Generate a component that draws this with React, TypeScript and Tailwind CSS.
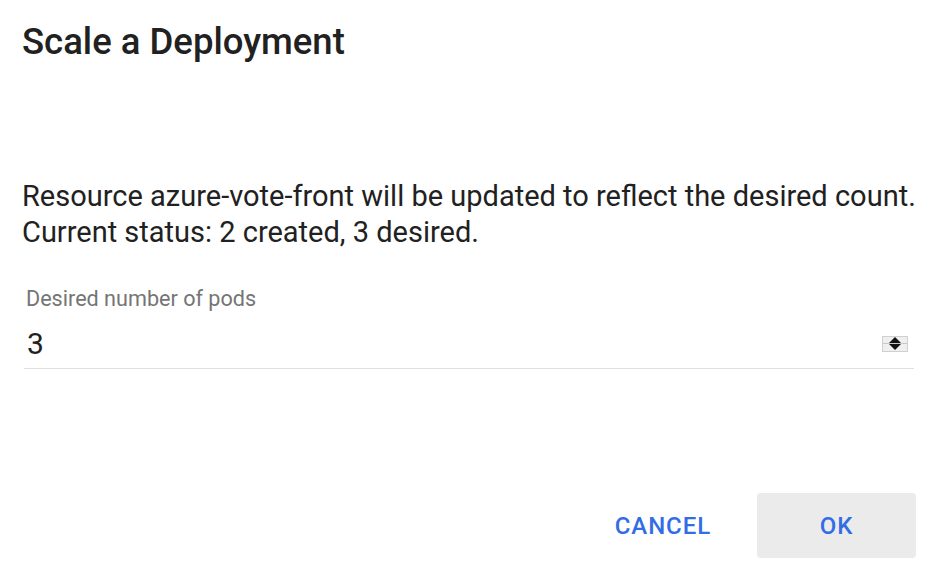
export default function App() {
  return (
    <div className="w-[933px] h-[586px] bg-white flex flex-col font-['Roboto',sans-serif] text-[#212121]">
      <h2 className="pl-[22px] pt-[21px] text-[36.5px] leading-[42px] font-medium">Scale a Deployment</h2>

      <div className="pl-[22px] pr-[10px] mt-[115px] text-[29px] leading-[36px]">
        <p>Resource azure-vote-front will be updated to reflect the desired count.</p>
        <p>Current status: 2 created, 3 desired.</p>
      </div>

      <div className="ml-[24px] mr-[19px] mt-[37px] flex flex-col">
        <label className="pl-[2px] text-[21.6px] leading-[24px] text-[#757575]">Desired number of pods</label>
        <div className="flex items-center justify-between h-[58px] pt-[8px] border-b border-[#e0e0e0]">
          <span className="pl-[3px] text-[30px] leading-[36px] text-[#212121]">3</span>
          <span className="mr-[6px] flex flex-col items-center justify-center w-[26px] h-[16px] bg-[#efefef] border border-[#d0d0d0]">
            <svg width="12" height="6" viewBox="0 0 12 6"><path d="M6 0 L12 6 L0 6 Z" fill="#111" /></svg>
            <span className="w-full h-px bg-[#c8c8c8]"></span>
            <svg width="12" height="6" viewBox="0 0 12 6"><path d="M0 0 L12 0 L6 6 Z" fill="#111" /></svg>
          </span>
        </div>
      </div>

      <div className="mt-auto mb-[28px] mr-[17px] flex justify-end items-center gap-[24px]">
        <button className="h-[65px] px-[22px] text-[24px] font-medium tracking-[0.9px] text-[#326de6]">CANCEL</button>
        <button className="w-[159px] h-[65px] rounded-[4px] bg-[#ebebeb] text-[24px] font-medium tracking-[0.9px] text-[#326de6]">OK</button>
      </div>
    </div>
  );
}
